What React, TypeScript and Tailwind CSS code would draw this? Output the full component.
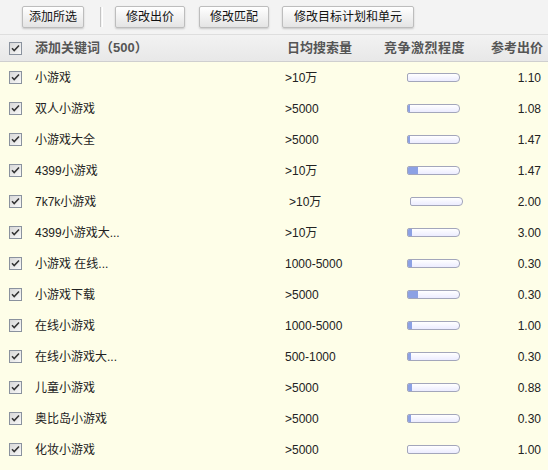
import React from "react";

const rows = [
  { kw: "小游戏", vol: ">10万", level: 0, price: "1.10" },
  { kw: "双人小游戏", vol: ">5000", level: 2, price: "1.08" },
  { kw: "小游戏大全", vol: ">5000", level: 2, price: "1.47" },
  { kw: "4399小游戏", vol: ">10万", level: 10, price: "1.47" },
  { kw: "7k7k小游戏", vol: " >10万", level: 0, price: "2.00", shift: true },
  { kw: "4399小游戏大...", vol: ">10万", level: 4, price: "3.00" },
  { kw: "小游戏 在线...", vol: "1000-5000", level: 4, price: "0.30" },
  { kw: "小游戏下载", vol: ">5000", level: 10, price: "0.30" },
  { kw: "在线小游戏", vol: "1000-5000", level: 4, price: "1.00" },
  { kw: "在线小游戏大...", vol: "500-1000", level: 3, price: "0.30" },
  { kw: "儿童小游戏", vol: ">5000", level: 4, price: "0.88" },
  { kw: "奥比岛小游戏", vol: ">5000", level: 3, price: "0.30" },
  { kw: "化妆小游戏", vol: ">5000", level: 0, price: "1.00" },
];

const Check = () => (
  <svg width="13" height="13" viewBox="0 0 13 13">
    <defs>
      <linearGradient id="cb" x1="0" y1="0" x2="1" y2="1">
        <stop offset="0" stopColor="#d6d6d6" />
        <stop offset="1" stopColor="#fafafa" />
      </linearGradient>
    </defs>
    <rect x="0.5" y="0.5" width="12" height="12" fill="url(#cb)" stroke="#8a929e" />
    <path d="M3 6.2 L5.2 8.6 L10 3.4" fill="none" stroke="#333" strokeWidth="1.5" />
  </svg>
);

const Button = ({ children, className }: { children: React.ReactNode; className: string }) => (
  <button
    className={`h-[22px] border border-[#bdbdbd] rounded-[2px] bg-gradient-to-b from-white to-[#e4e4e4] shadow-[0_1px_2px_rgba(0,0,0,0.18)] text-[12px] text-[#111] leading-none ${className}`}
  >
    {children}
  </button>
);

export default function App() {
  return (
    <div
      className="w-[548px] h-[470px] overflow-hidden bg-[#fefee8] text-[12px] text-[#222]"
      style={{ fontFamily: '"Liberation Sans", "Noto Sans CJK SC", sans-serif' }}
    >
      {/* Toolbar */}
      <div className="h-[35px] flex items-center pl-[22px] bg-[#f3f3f3] border-b border-[#dedede]">
        <Button className="w-[62px]">添加所选</Button>
        <div className="ml-[16px] mr-[12px] flex gap-[1px] h-[20px]">
          <div className="w-px bg-[#c4c4c4]" />
          <div className="w-px bg-white" />
        </div>
        <Button className="w-[70px]">修改出价</Button>
        <div className="w-[14px]" />
        <Button className="w-[70px]">修改匹配</Button>
        <div className="w-[13px]" />
        <Button className="w-[132px]">修改目标计划和单元</Button>
      </div>

      {/* Header */}
      <div className="h-[27px] flex items-center bg-gradient-to-b from-[#f2f2f2] to-[#e8e8e8] border-b border-[#cfcfcf] font-bold text-[13px] text-[#555]">
        <div className="w-[30px] flex justify-center">
          <Check />
        </div>
        <div className="w-[257px] pl-[5px]">添加关键词（500）</div>
        <div className="w-[97px]">日均搜索量</div>
        <div className="w-[103px] tracking-[0.5px]">竞争激烈程度</div>
        <div className="flex-1 text-right pr-[5px]">参考出价</div>
      </div>

      {/* Rows */}
      <div className="flex flex-col">
        {rows.map((r, i) => (
          <div key={i} className="h-[31px] flex items-center">
            <div className="w-[30px] flex justify-center">
              <Check />
            </div>
            <div className="w-[255px] pl-[5px] whitespace-nowrap">{r.kw}</div>
            <div className={r.shift ? "w-[100px] pl-[4px]" : "w-[100px]"}>{r.vol.trim()}</div>
            <div className={r.shift ? "w-[107px] pl-[25px]" : "w-[107px] pl-[22px]"}>
              <div className="w-[53px] h-[9px] rounded-l-[2px] rounded-r-[4px] border border-[#a3a6bb] bg-gradient-to-b from-white to-[#ececff] overflow-hidden">
                <div className="h-full bg-[#8ca1e4]" style={{ width: r.level }} />
              </div>
            </div>
            <div className="flex-1 text-right pr-[7px]">{r.price}</div>
          </div>
        ))}
      </div>
    </div>
  );
}
